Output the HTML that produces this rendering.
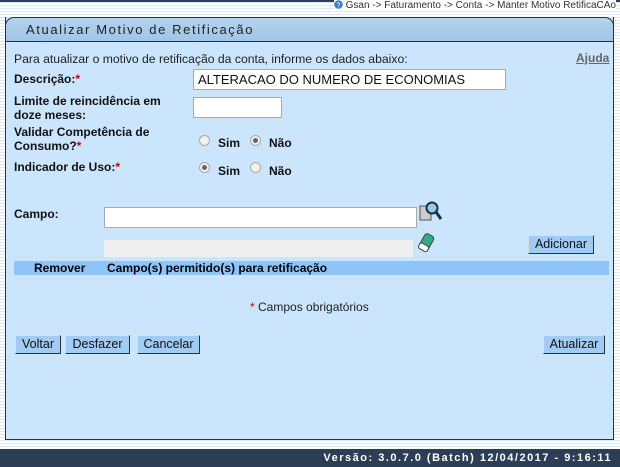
<!DOCTYPE html>
<html><head><meta charset="utf-8"><style>
*{margin:0;padding:0;box-sizing:border-box}
body{width:620px;height:467px;overflow:hidden;font-family:"Liberation Sans",Arial,sans-serif;font-size:12px;color:#000;position:relative;
background:repeating-linear-gradient(#fff 0 2px,#dde8f2 2px 3px);}
.abs{position:absolute}
.crumb{top:0;right:4px;font-size:10px;color:#333;height:11px;line-height:11px;background:#fff}
.panel{left:5px;top:17px;width:609px;height:423px;background:#cbe5fd;border:1px solid #1e3550;border-top:none}
.title{left:5px;top:17px;width:609px;height:25px;border:1px solid #1e3550;border-radius:9px 9px 0 0;
background:linear-gradient(#b4d3ee,#9fc5e8);font-size:13px;letter-spacing:1.6px;color:#222;padding:4px 0 0 20px}
.lbl{font-weight:bold;font-size:12px;color:#111}
.req{color:#c00}
input.t{position:absolute;height:21px;border:1px solid #aaa;background:#fff;font-size:13px;font-family:"Liberation Sans",Arial,sans-serif;padding-left:4px;color:#111}
.rad{width:11px;height:11px;border-radius:50%;border:1px solid #aaa;background:#f2f2f2;position:absolute}
.rad.on::after{content:"";position:absolute;left:2px;top:2px;width:5px;height:5px;border-radius:50%;background:#666}
.btn{position:absolute;height:19px;background:#9fcbf5;border:1px solid #333;border-color:#ddd #333 #333 #ddd;font-size:12.5px;line-height:17px;text-align:center;color:#111}
.footer{left:0;top:449px;width:620px;height:18px;background:#2c3e55;color:#fff;font-weight:bold;font-size:11px;letter-spacing:1.5px;text-align:right;padding:3px 8px 0 0}
</style></head><body>
<div class="abs" style="left:0;top:0;width:620px;height:2px;background:#2c3e55"></div>
<div class="abs crumb"><svg width="9" height="9" style="vertical-align:-1px"><circle cx="4.5" cy="4.5" r="4.3" fill="#3d7cc9"/><text x="4.5" y="7.5" font-size="7" fill="#fff" text-anchor="middle" font-family="Liberation Sans">?</text></svg> Gsan -&gt; Faturamento -&gt; Conta -&gt; Manter Motivo RetificaCAo</div>
<div class="abs panel"></div>
<div class="abs title">Atualizar Motivo de Retificação</div>
<div class="abs" style="left:14px;top:52px;color:#222;font-size:12.2px">Para atualizar o motivo de retificação da conta, informe os dados abaixo:</div>
<div class="abs" style="left:576px;top:51px;font-weight:bold;color:#666;text-decoration:underline">Ajuda</div>
<div class="abs lbl" style="left:14px;top:72px">Descrição:<span class="req">*</span></div>
<input class="t" style="left:193px;top:69px;width:313px" value="ALTERACAO DO NUMERO DE ECONOMIAS">
<div class="abs lbl" style="left:14px;top:94px;line-height:14px">Limite de reincidência em<br>doze meses:</div>
<input class="t" style="left:193px;top:97px;width:89px">
<div class="abs lbl" style="left:14px;top:125px;line-height:14px">Validar Competência de<br>Consumo?<span class="req">*</span></div>
<div class="rad" style="left:199px;top:135px"></div><div class="abs lbl" style="left:218px;top:136px">Sim</div>
<div class="rad on" style="left:250px;top:135px"></div><div class="abs lbl" style="left:269px;top:136px">Não</div>
<div class="abs lbl" style="left:14px;top:160px">Indicador de Uso:<span class="req">*</span></div>
<div class="rad on" style="left:199px;top:162px"></div><div class="abs lbl" style="left:218px;top:164px">Sim</div>
<div class="rad" style="left:250px;top:162px"></div><div class="abs lbl" style="left:269px;top:164px">Não</div>
<div class="abs lbl" style="left:14px;top:207px">Campo:</div>
<input class="t" style="left:104px;top:207px;width:313px">
<svg class="abs" style="left:419px;top:200px" width="24" height="22"><rect x="1" y="6" width="11" height="14" fill="#ccc" stroke="#555"/><circle cx="13" cy="8" r="5.5" fill="#9cd" stroke="#135" stroke-width="2"/><line x1="17" y1="12" x2="22" y2="19" stroke="#135" stroke-width="3"/></svg>
<div class="abs" style="left:104px;top:240px;width:309px;height:17px;background:#efefef"></div>
<svg class="abs" style="left:417px;top:233px" width="18" height="20"><g transform="rotate(30 9 10)"><rect x="4" y="1" width="10" height="17" rx="3" fill="#3a8" stroke="#444"/><rect x="4" y="12" width="10" height="6" rx="2" fill="#fff" stroke="#444"/></g></svg>
<div class="btn" style="left:528px;top:235px;width:66px">Adicionar</div>
<div class="abs" style="left:14px;top:261px;width:595px;height:14px;background:#8ec4f8;font-weight:bold;line-height:14px"><span class="abs" style="left:20px">Remover</span><span class="abs" style="left:93px">Campo(s) permitido(s) para retificação</span></div>
<div class="abs" style="left:250px;top:300px;color:#222"><span class="req">*</span> Campos obrigatórios</div>
<div class="btn" style="left:15px;top:335px;width:46px">Voltar</div>
<div class="btn" style="left:65px;top:335px;width:65px">Desfazer</div>
<div class="btn" style="left:137px;top:335px;width:63px">Cancelar</div>
<div class="btn" style="left:543px;top:335px;width:62px">Atualizar</div>
<div class="abs footer">Versão: 3.0.7.0 (Batch) 12/04/2017 - 9:16:11</div>
</body></html>
